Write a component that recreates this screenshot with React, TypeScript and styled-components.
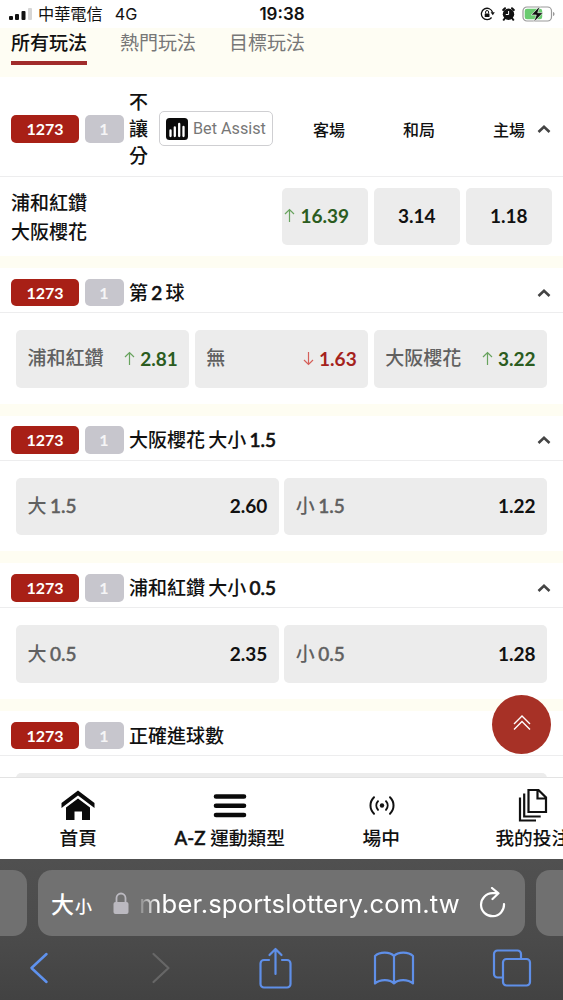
import React from 'react';
import styled, { createGlobalStyle } from 'styled-components';

const Global = createGlobalStyle`
  * { box-sizing: border-box; }
  body { margin: 0; background: #fff; }
`;

const Screen = styled.div`
  width: 563px;
  height: 1000px;
  display: flex;
  flex-direction: column;
  overflow: hidden;
  background: #fff;
  color: #111;
  font-family: Lato, 'Noto Sans CJK TC', sans-serif;
`;

const StatusBar = styled.header`
  height: 28px;
  flex: none;
  display: grid;
  grid-template-columns: 1fr auto 1fr;
  align-items: center;
  padding: 0 8px 0 9px;
  color: #111;
  font-family: Inter, 'Noto Sans CJK TC', sans-serif;
`;

const Carrier = styled.div`
  display: flex;
  align-items: center;
  font-size: 16.2px;
  line-height: 28px;
  svg { margin-right: 6px; }
  span + span { margin-left: 12px; }
`;

const Clock = styled.div`
  font-size: 17px;
  font-weight: 600;
`;

const StatusIcons = styled.div`
  display: flex;
  align-items: center;
  justify-content: flex-end;
  svg + svg { margin-left: 7px; }
`;

const Tabs = styled.nav`
  height: 49px;
  flex: none;
  display: flex;
  gap: 33px;
  padding-left: 11px;
  background: #fefdf3;
`;

const Tab = styled.div<{ $active?: boolean }>`
  height: 37px;
  font-size: 19px;
  line-height: 30px;
  font-weight: ${p => (p.$active ? 500 : 400)};
  color: ${p => (p.$active ? '#111' : '#777')};
  border-bottom: 4px solid ${p => (p.$active ? '#a12c2b' : 'transparent')};
`;

const Content = styled.main`
  flex: 1;
  min-height: 0;
  overflow: hidden;
`;

const Section = styled.section`
  border-bottom: 12px solid #fefdf2;
`;

const SectionHeader = styled.div<{ $tall?: boolean }>`
  height: ${p => (p.$tall ? 99.5 : 45)}px;
  display: flex;
  align-items: center;
  padding: ${p => (p.$tall ? '5px 0 0 11px' : '5px 0 0 11px')};
  border-bottom: 1px solid #ededee;
`;

const Pill = styled.span<{ $kind: 'code' | 'count' }>`
  flex: none;
  width: ${p => (p.$kind === 'code' ? 68 : 39)}px;
  height: 27.5px;
  margin-right: 5.5px;
  border-radius: 5px;
  background: ${p => (p.$kind === 'code' ? '#a82016' : '#c7c6cd')};
  color: ${p => (p.$kind === 'code' ? '#fff' : '#f5f5f6')};
  font-size: 16px;
  font-weight: 700;
  line-height: 27px;
  text-align: center;
`;

const Title = styled.h2<{ $narrow?: boolean }>`
  margin: 0;
  width: ${p => (p.$narrow ? '19px' : 'auto')};
  font-size: 19px;
  font-weight: 500;
  line-height: 27.4px;
  word-spacing: -1.6px;
`;

const Latin = styled.span<{ $stroke: number }>`
  -webkit-text-stroke: ${p => p.$stroke}px currentColor;
`;

const Assist = styled.button`
  flex: none;
  width: 114px;
  height: 35px;
  margin: 0 0 0 11px;
  padding: 0 0 0 6px;
  display: flex;
  align-items: center;
  gap: 5px;
  white-space: nowrap;
  border: 1px solid #cfcfd2;
  border-radius: 5px;
  background: #fff;
  color: #777;
  font: 400 16.2px Roboto, sans-serif;
`;

const Columns = styled.div`
  flex: 1;
  display: flex;
  justify-content: space-between;
  padding: 0 12px 0 40px;
  font-size: 16px;
  font-weight: 500;
`;

const Toggle = styled.svg`
  flex: none;
  width: 14px;
  height: 10px;
  margin: 0 12px 0 auto;
`;

const MatchRow = styled.div`
  height: 79.5px;
  display: flex;
  align-items: center;
  gap: 5.5px;
  padding: 0 11px;
`;

const Teams = styled.div`
  flex: 1;
  padding-top: 2px;
  font-size: 19px;
  font-weight: 500;
  line-height: 29px;
`;

const Options = styled.div`
  height: 90.7px;
  display: flex;
  gap: 5.5px;
  padding: 17px 16px;
`;

const Option = styled.button<{ $compact?: boolean }>`
  flex: ${p => (p.$compact ? '0 0 86.5px' : '1 1 0')};
  height: 57.5px;
  display: flex;
  align-items: center;
  justify-content: ${p => (p.$compact ? 'center' : 'space-between')};
  padding: 0 ${p => (p.$compact ? 0 : 11.5)}px 1px;
  border: 0;
  border-radius: 5px;
  background: #ececec;
  font-family: inherit;
  font-size: 19px;
  svg { margin-left: ${p => (p.$compact ? -16 : 0)}px; }
`;

const Name = styled.span`
  color: #606060;
  font-weight: 500;
  line-height: 28px;
  word-spacing: -1.3px;
`;

type Trend = 'up' | 'down' | undefined;

const Price = styled.span<{ $trend: Trend }>`
  display: inline-flex;
  align-items: center;
  gap: 5px;
  font-weight: 700;
  color: ${p => (p.$trend === 'up' ? '#2b5c20' : p.$trend === 'down' ? '#a5221c' : '#111')};
`;

const BottomNav = styled.nav`
  flex: none;
  height: 82px;
  display: flex;
  border-top: 1.5px solid #e3e3e3;
  background: #fff;
  overflow: hidden;
`;

const NavItem = styled.div`
  flex: 0 0 151.5px;
  display: flex;
  flex-direction: column;
  align-items: center;
  padding-top: 9px;
  font-size: 18.7px;
  font-weight: 500;
  line-height: 30px;
  white-space: nowrap;
  &:first-child { margin-left: 2.5px; }
  svg { flex: none; }
`;

const ToTop = styled.button`
  position: absolute;
  left: 492px;
  top: 695px;
  width: 59px;
  height: 59px;
  padding: 0 0 3px;
  border: 0;
  border-radius: 50%;
  background: #a73126;
  display: flex;
  align-items: center;
  justify-content: center;
`;

const Browser = styled.footer`
  flex: none;
  height: 141px;
  padding-top: 11px;
  background: linear-gradient(#505050, #4b4b4b 55%, #424242);
`;

const AddressRow = styled.div`
  display: flex;
  justify-content: space-between;
  height: 66px;
`;

const SidePage = styled.div<{ $side: 'left' | 'right' }>`
  width: 27px;
  background: #707070;
  border-radius: ${p => (p.$side === 'left' ? '0 14px 14px 0' : '14px 0 0 14px')};
`;

const Address = styled.div`
  width: 487px;
  display: flex;
  align-items: center;
  padding: 0 19px 0 13px;
  border-radius: 14px;
  background: #717171;
  color: #fff;
`;

const TextSize = styled.span`
  width: 62px;
  font-family: 'Noto Sans CJK TC', sans-serif;
  font-size: 23px;
  font-weight: 500;
  white-space: nowrap;
  small { margin-left: 1px; font-size: 17px; }
`;

const Url = styled.span`
  flex: 1;
  min-width: 0;
  margin-left: 10px;
  font-family: Inter, sans-serif;
  font-size: 25.6px;
  letter-spacing: 0.15px;
  white-space: nowrap;
  mask-image: linear-gradient(90deg, rgba(0, 0, 0, 0.15), #000 20px);
`;

const Toolbar = styled.div`
  height: 64px;
  display: flex;
  align-items: center;
  justify-content: space-between;
  padding: 0 30px 0 17.5px;
`;

const Chevron = () => (
  <Toggle viewBox="0 0 14 10" fill="none" stroke="#444" strokeWidth="2.6">
    <path d="M1.500 8 7 2.800 12.500 8" />
  </Toggle>
);

const Arrow = ({ trend }: { trend: Trend }) => (
  <svg width="11" height="15" viewBox="0 0 11 15" fill="none" stroke={trend === 'up' ? '#68a35e' : '#d5605a'} strokeWidth="1.2">
    <path d={trend === 'up' ? 'M5.5 14V1.5M1 6l4.500-4.500L10 6' : 'M5.500 1v12.500M1 9l4.500 4.500L10 9'} />
  </svg>
);

const Odds = ({ value, trend }: { value: string; trend?: Trend }) => (
  <Price $trend={trend}>
    {trend && <Arrow trend={trend} />}
    {value}
  </Price>
);

const Mixed = ({ text, stroke }: { text: string; stroke: number }) => (
  <>
    {text.split(/([A-Z0-9.-]+)/).map((part, i) =>
      i % 2 ? <Latin key={i} $stroke={stroke}>{part}</Latin> : part
    )}
  </>
);

type Choice = { name: string; value: string; trend?: Trend };

const markets: { title: string; open: boolean; choices: Choice[] }[] = [
  {
    title: '第 2 球',
    open: true,
    choices: [
      { name: '浦和紅鑽', value: '2.81', trend: 'up' },
      { name: '無', value: '1.63', trend: 'down' },
      { name: '大阪櫻花', value: '3.22', trend: 'up' },
    ],
  },
  { title: '大阪櫻花 大小 1.5', open: true, choices: [{ name: '大 1.5', value: '2.60' }, { name: '小 1.5', value: '1.22' }] },
  { title: '浦和紅鑽 大小 0.5', open: true, choices: [{ name: '大 0.5', value: '2.35' }, { name: '小 0.5', value: '1.28' }] },
  { title: '正確進球數', open: false, choices: [{ name: '', value: '' }] },
];

const Pills = () => (
  <>
    <Pill $kind="code">1273</Pill>
    <Pill $kind="count">1</Pill>
  </>
);

const Market = ({ title, open, choices }: (typeof markets)[number]) => (
  <Section>
    <SectionHeader>
      <Pills />
      <Title><Mixed text={title} stroke={0.6} /></Title>
      {open && <Chevron />}
    </SectionHeader>
    <Options>
      {choices.map(c => (
        <Option key={c.name}>
          <Name><Mixed text={c.name} stroke={0.45} /></Name>
          <Odds value={c.value} trend={c.trend} />
        </Option>
      ))}
    </Options>
  </Section>
);

export default function App() {
  return (
    <Screen>
      <Global />
      <StatusBar>
        <Carrier>
          <svg width="23" height="14" viewBox="0 0 23 14">
            <rect x="0" y="9" width="4" height="4" rx="1" fill="#111" />
            <rect x="6" y="7" width="4" height="6" rx="1" fill="#111" />
            <rect x="12.500" y="4" width="4" height="9" rx="1" fill="#111" />
            <rect x="19" y="1" width="4" height="12" rx="1" fill="#d6d6d6" />
          </svg>
          <span>中華電信</span>
          <span>4G</span>
        </Carrier>
        <Clock>19:38</Clock>
        <StatusIcons>
          <svg width="15" height="14" viewBox="0 0 15 14" fill="none" stroke="#111" strokeWidth="1.3">
            <path d="M12.600 5.500A5.700 5.700 0 1 0 11.600 10.500" />
            <path d="M10.600 5.300h4.200l-2 2.900z" fill="#111" stroke="none" />
            <rect x="4.700" y="6.400" width="4.800" height="3.600" rx="0.600" fill="#111" stroke="none" />
            <path d="M5.600 6.500V5a1.500 1.500 0 0 1 3 0v1.500" strokeWidth="1" />
          </svg>
          <svg width="13" height="14" viewBox="0 0 13 14">
            <circle cx="6.500" cy="7.300" r="5.700" fill="#111" />
            <path d="M1.200 3 3 1.300M11.800 3 10 1.300M2.700 11.500l-1 1.300M10.300 11.500l1 1.300" stroke="#111" strokeWidth="2" strokeLinecap="round" />
            <path d="M6.600 4v3.500H3.800" fill="none" stroke="#fff" strokeWidth="1" />
          </svg>
          <svg width="33" height="18" viewBox="0 0 33 18">
            <rect x="1" y="2" width="28.500" height="14" rx="4" fill="#fff" stroke="#999" strokeWidth="1.200" />
            <rect x="2.700" y="3.700" width="17.500" height="10.600" rx="2.300" fill="#6acb70" />
            <path d="M31 7c2 .6 2 3.400 0 4z" fill="#999" />
            <path d="M18.200.8 9.200 10h5.100l-2.600 7.300L21 7.700h-5.300z" fill="#111" stroke="#fff" strokeWidth=".6" />
          </svg>
        </StatusIcons>
      </StatusBar>

      <Tabs>
        <Tab $active>所有玩法</Tab>
        <Tab>熱門玩法</Tab>
        <Tab>目標玩法</Tab>
      </Tabs>

      <Content>
        <Section>
          <SectionHeader $tall>
            <Pills />
            <Title $narrow>不讓分</Title>
            <Assist>
              <svg width="22" height="22" viewBox="0 0 22 22">
                <rect width="22" height="22" rx="3.500" fill="#0a0a0a" />
                <path d="M4.500 12.500V18M8.800 9.500V18M13.200 6V18M17.500 9V18" stroke="#fff" strokeWidth="2.300" strokeLinecap="round" />
              </svg>
              Bet Assist
            </Assist>
            <Columns>
              <span>客場</span>
              <span>和局</span>
              <span>主場</span>
            </Columns>
            <Chevron />
          </SectionHeader>
          <MatchRow>
            <Teams>
              浦和紅鑽
              <br />
              大阪櫻花
            </Teams>
            <Option $compact><Odds value="16.39" trend="up" /></Option>
            <Option $compact><Odds value="3.14" /></Option>
            <Option $compact><Odds value="1.18" /></Option>
          </MatchRow>
        </Section>
        {markets.map(m => <Market key={m.title} {...m} />)}
      </Content>

      <BottomNav>
        <NavItem>
          <svg width="34" height="36" viewBox="0 0 34 36" fill="#0a0a0a">
            <path d="M17 3.500 33.500 16v5L17 8.500.5 21v-5z" />
            <path d="M17 11.500 29 20.500V33h-8v-8.500h-7.500V33H5V20.500z" />
          </svg>
          首頁
        </NavItem>
        <NavItem>
          <svg width="34" height="36" viewBox="0 0 34 36" stroke="#0a0a0a" strokeWidth="4.600" strokeLinecap="round">
            <path d="M3 9.500h28M3 18.700h28M3 28h28" />
          </svg>
          <span><Mixed text="A-Z 運動類型" stroke={0.5} /></span>
        </NavItem>
        <NavItem>
          <svg width="28" height="36" viewBox="-1 0 28 36" fill="none" stroke="#111" strokeWidth="2" strokeLinecap="round">
            <circle cx="14" cy="18.500" r="2.200" fill="#111" stroke="none" />
            <path d="M10 14.200a6.500 6.500 0 0 0 0 8.600M18 14.200a6.500 6.500 0 0 1 0 8.600M6 10.300c-4.700 4.600-4.700 11.800 0 16.400M22 10.300c4.700 4.600 4.700 11.800 0 16.400" />
          </svg>
          場中
        </NavItem>
        <NavItem>
          <svg width="30" height="36" viewBox="0 0 30 36" fill="none" stroke="#111" strokeWidth="2.200">
            <path d="M10.500 3h10l7.500 7.500v14.500H10.500zM19.500 3v8.500H28M6.200 6.500V29.500h16.500M2 10.500v23h16" />
          </svg>
          我的投注
        </NavItem>
      </BottomNav>

      <Browser>
        <AddressRow>
          <SidePage $side="left" />
          <Address>
            <TextSize>大<small>小</small></TextSize>
            <svg width="16" height="23" viewBox="0 0 16 23">
              <rect x=".5" y="10" width="15" height="12" rx="2" fill="#bbb9c0" />
              <path d="M3.500 11V6a4.500 4.500 0 0 1 9 0v5" fill="none" stroke="#bbb9c0" strokeWidth="1.800" />
            </svg>
            <Url>mber.sportslottery.com.tw</Url>
            <svg width="27" height="32" viewBox="0 0 27 32" fill="none" stroke="#fff" strokeWidth="2.200" strokeLinecap="round" strokeLinejoin="round">
              <path d="M18.500 6.200H13.500A11.500 11.500 0 1 0 25 17M13 1l6.500 5.300-6 5.700" />
            </svg>
          </Address>
          <SidePage $side="right" />
        </AddressRow>
        <Toolbar>
          <svg width="42" height="32" viewBox="-11.500 0 42 32" fill="none" stroke="#5f92ee" strokeWidth="2.500" strokeLinecap="round" strokeLinejoin="round">
            <path d="M17 2 2 16l15 14" />
          </svg>
          <svg width="42" height="32" viewBox="-15.500 0 42 32" fill="none" stroke="#676767" strokeWidth="2.200" strokeLinecap="round" strokeLinejoin="round">
            <path d="m2 2 15 14L2 30" />
          </svg>
          <svg width="42" height="42" viewBox="-5 0 42 42" fill="none" stroke="#5f8fe8" strokeWidth="2.200" strokeLinecap="round" strokeLinejoin="round">
            <path d="M10 13H5a3.500 3.500 0 0 0-3.500 3.500V37A3.500 3.500 0 0 0 5 40.500h23a3.500 3.500 0 0 0 3.500-3.500V16.500A3.500 3.500 0 0 0 28 13h-5M16.500 27V2M10.500 8l6-6 6 6" />
          </svg>
          <svg width="42" height="34" viewBox="0 0 42 34" fill="none" stroke="#5f8fe8" strokeWidth="2.200" strokeLinejoin="round">
            <path d="M21 5v27.500c-4-4.500-14-4.500-19 0V5C6.500.5 17 .5 21 5c4-4.500 14.500-4.500 19 0v27.500c-5-4.500-15-4.500-19 0" />
          </svg>
          <svg width="42" height="38" viewBox="-1.500 0 42 38" fill="none" stroke="#5f8fe8" strokeWidth="2.200">
            <path d="M10 28.500H5A3.500 3.500 0 0 1 1.500 25V5A3.500 3.500 0 0 1 5 1.500h20A3.500 3.500 0 0 1 28.500 5v5" />
            <rect x="10.500" y="10" width="27" height="26.500" rx="3.500" />
          </svg>
        </Toolbar>
      </Browser>
      <ToTop>
        <svg width="18" height="16" viewBox="0 0 18 16" fill="none" stroke="#fff" strokeWidth="1.400">
          <path d="m1 9 8-8 8 8M1 14.500l8-8 8 8" />
        </svg>
      </ToTop>
    </Screen>
  );
}
